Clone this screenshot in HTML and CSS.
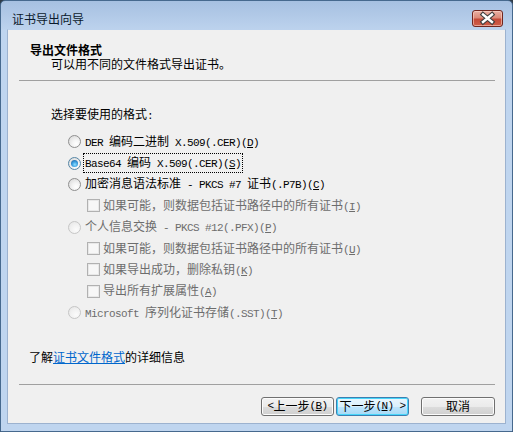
FILE: index.html
```html
<!DOCTYPE html>
<html lang="zh-CN">
<head>
<meta charset="utf-8">
<title>证书导出向导</title>
<link rel="stylesheet" href="styles.css">
</head>
<body>
<div class="window">
  <div class="titlebar">
    <span class="title">证书导出向导</span>
    <div class="close">
      <svg width="29" height="15" viewBox="0 0 29 15">
        <path d="M10 3.5 L19 11 M19 3.5 L10 11" stroke="#3d3d3d" stroke-width="4.6" stroke-linecap="square" fill="none"/>
        <path d="M10 3.5 L19 11 M19 3.5 L10 11" stroke="#ffffff" stroke-width="2.4" stroke-linecap="square" fill="none"/>
      </svg>
    </div>
  </div>
  <div class="client">
    <div class="header">
      <div class="h1">导出文件格式</div>
      <div class="sub">可以用不同的文件格式导出证书。</div>
    </div>
    <div class="sep"></div>
    <div class="label">选择要使用的格式<span class="a">:</span></div>
    <div class="options">
      <div class="row"><span class="radio"></span><span class="txt"><span class="a">DER </span>编码二进制<span class="a"> X.509(.CER)(<u>D</u>)</span></span></div>
      <div class="row"><span class="radio on"></span><span class="txt focus"><span class="a">Base64 </span>编码<span class="a"> X.509(.CER)(<u>S</u>)</span></span></div>
      <div class="row"><span class="radio"></span><span class="txt">加密消息语法标准<span class="a"> - PKCS #7 </span>证书<span class="a">(.P7B)(<u>C</u>)</span></span></div>
      <div class="row sub-row dis"><span class="check"></span><span class="txt">如果可能，则数据包括证书路径中的所有证书<span class="a">(<u>I</u>)</span></span></div>
      <div class="row dis"><span class="radio"></span><span class="txt">个人信息交换<span class="a"> - PKCS #12(.PFX)(<u>P</u>)</span></span></div>
      <div class="row sub-row dis"><span class="check"></span><span class="txt">如果可能，则数据包括证书路径中的所有证书<span class="a">(<u>U</u>)</span></span></div>
      <div class="row sub-row dis"><span class="check"></span><span class="txt">如果导出成功，删除私钥<span class="a">(<u>K</u>)</span></span></div>
      <div class="row sub-row dis"><span class="check"></span><span class="txt">导出所有扩展属性<span class="a">(<u>A</u>)</span></span></div>
      <div class="row dis"><span class="radio"></span><span class="txt"><span class="a">Microsoft </span>序列化证书存储<span class="a">(.SST)(<u>T</u>)</span></span></div>
    </div>
    <div class="more">了解<a href="#" class="link">证书文件格式</a>的详细信息</div>
    <div class="sep sep2"></div>
    <div class="buttons">
      <div class="btn"><span class="a">&lt; </span>上一步<span class="a">(<u>B</u>)</span></div>
      <div class="btn default">下一步<span class="a">(<u>N</u>) &gt;</span></div>
      <div class="btn cancel">取消</div>
    </div>
  </div>
</div>
</body>
</html>
```

FILE: styles.css
```css
html, body {
  margin: 0;
  padding: 0;
  background: #2f3b48;
}
body {
  width: 513px;
  height: 432px;
  overflow: hidden;
  font-family: "Noto Sans CJK SC", "Noto Sans", sans-serif;
  font-size: 12px;
  color: #000;
}
.window {
  box-sizing: border-box;
  width: 513px;
  height: 432px;
  border: 1px solid #46698e;
  border-radius: 5px 5px 0 0;
  background: linear-gradient(#a6c0e1 0px, #bcd2ed 28px, #bfd5ef 29px, #bfd5ef 100%);
  display: flex;
  flex-direction: column;
}
.titlebar {
  height: 28px;
  display: flex;
  justify-content: space-between;
  align-items: flex-start;
}
.title {
  margin: 11px 0 0 11px;
  line-height: 14px;
  color: #0b1a2c;
}
.close {
  box-sizing: border-box;
  width: 31px;
  height: 17px;
  margin: 9px 9px 0 0;
  border: 1px solid #70261f;
  border-radius: 3px;
  background: linear-gradient(#e9b0a4 0%, #dc8a79 45%, #c44a38 55%, #cf5e48 100%);
  box-shadow: inset 0 0 0 1px rgba(255, 220, 210, 0.55);
  display: flex;
}
.close svg {
  display: block;
}
.client {
  box-sizing: border-box;
  margin: 0 6px 7px 6px;
  height: 395px;
  border: 1px solid #9cb2cf;
  border-top-color: #bcd2ed;
  background: #f0f0f0;
  display: flex;
  flex-direction: column;
}
.header {
  padding-top: 13px;
}
.h1 {
  padding-left: 22px;
  font-weight: bold;
  line-height: 14px;
}
.sub {
  padding-left: 43px;
  line-height: 14px;
}
.sep {
  height: 1px;
  margin: 9px 10px 0 11px;
  background: #a0a0a0;
}
.label {
  margin-top: 26px;
  padding-left: 43px;
  line-height: 14px;
}
.a {
  font-family: "Liberation Mono", monospace;
  font-size: 11px;
  letter-spacing: -0.6px;
}
.options {
  margin-top: 8px;
  display: flex;
  flex-direction: column;
}
.row {
  height: 21.375px;
  display: flex;
  align-items: center;
  padding-left: 60px;
  line-height: 14px;
}
.row.sub-row {
  padding-left: 79px;
}
.row.dis {
  color: #6d6d6d;
}
.txt {
  margin-left: 4px;
  white-space: nowrap;
}
.sub-row .txt {
  margin-left: 3px;
}
.focus {
  outline: 1px dotted #000;
  outline-offset: 1px;
}
.radio {
  position: relative;
  box-sizing: border-box;
  width: 13px;
  height: 13px;
  border-radius: 50%;
  border: 1px solid #8f8f8f;
  background: radial-gradient(circle at 65% 70%, #ffffff 0%, #f4f4f4 35%, #d4d4d4 100%);
  flex: none;
}
.radio.on {
  border-color: #5586a6;
}
.radio.on::after {
  content: "";
  position: absolute;
  left: 2px;
  top: 2px;
  width: 7px;
  height: 7px;
  border-radius: 50%;
  background: radial-gradient(circle at 55% 65%, #8ee0ff 0%, #3a9ee0 45%, #17518c 100%);
}
.dis .radio {
  border-color: #c6c6c6;
  background: radial-gradient(circle at 65% 70%, #fbfbfb 0%, #f1f1f1 50%, #e2e2e2 100%);
}
.check {
  box-sizing: border-box;
  width: 13px;
  height: 13px;
  border: 1px solid #b1b1b1;
  background: #f7f7f7;
  box-shadow: inset 0 0 0 1px #e8e8e8;
  flex: none;
}
.more {
  margin-top: 26.6px;
  padding-left: 21px;
  line-height: 14px;
}
.link {
  color: #0066cc;
  text-decoration: underline;
}
.sep2 {
  margin-top: 20px;
}
.buttons {
  margin-top: 12px;
  padding-right: 10px;
  display: flex;
  justify-content: flex-end;
}
.btn {
  box-sizing: border-box;
  width: 73px;
  height: 19px;
  border: 1px solid #707070;
  border-radius: 3px;
  background: linear-gradient(#f2f2f2 0%, #ebebeb 50%, #dddddd 50%, #cfcfcf 100%);
  box-shadow: inset 0 0 0 1px #fcfcfc;
  display: flex;
  align-items: center;
  justify-content: center;
  line-height: 14px;
  white-space: nowrap;
}
.btn.default {
  margin-left: 2px;
  border-color: #3c7fb1;
  background: linear-gradient(#eaf6fd 0%, #d9f0fc 50%, #bee6fd 50%, #a7d9f5 100%);
  box-shadow: inset 0 0 0 1px #48d6fa;
}
.btn.cancel {
  width: 74px;
  margin-left: 12px;
}
```
